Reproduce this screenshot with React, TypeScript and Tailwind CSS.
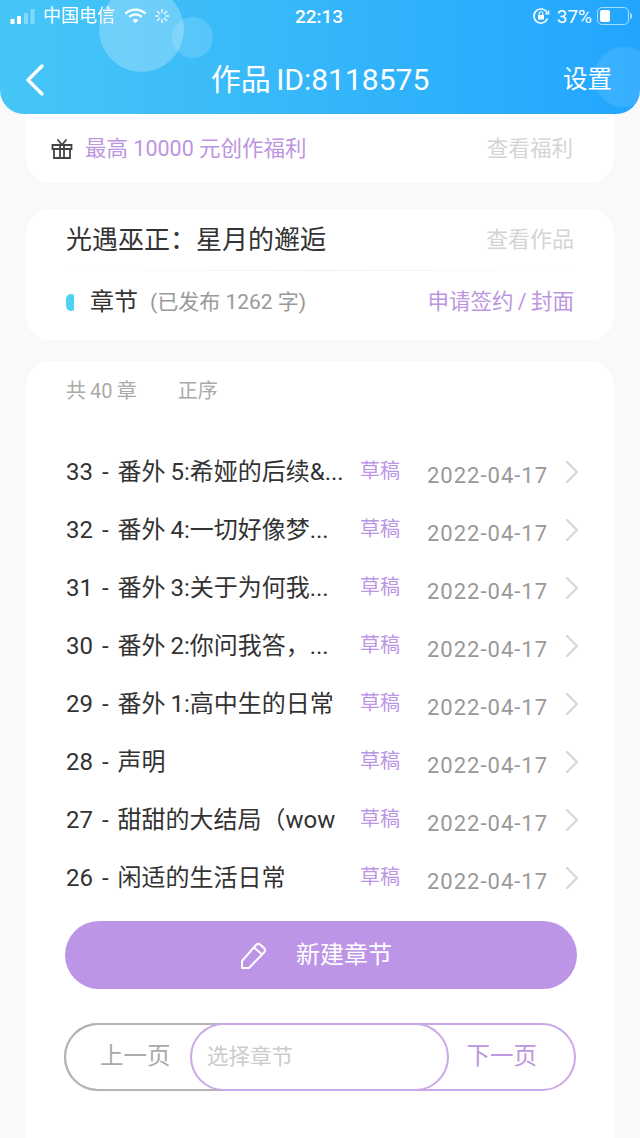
const FONT = "font-['Roboto','Noto_Sans_CJK_SC',sans-serif]";

const chapters = [
  "33 - 番外\u20095:希娅的后续&...",
  "32 - 番外\u20094:一切好像梦...",
  "31 - 番外\u20093:关于为何我...",
  "30 - 番外\u20092:你问我答，...",
  "29 - 番外\u20091:高中生的日常",
  "28 - 声明",
  "27 - 甜甜的大结局（wow",
  "26 - 闲适的生活日常",
];

function StatusBar() {
  return (
    <div className="flex h-[32px] items-center justify-between pl-[10px] pr-[8px] text-white">
      <div className="flex w-[190px] items-center">
        <svg width="28" height="18" viewBox="0 0 28 18" fill="white">
          <rect x="0.5" y="12" width="4" height="5" rx="1" />
          <rect x="7" y="9" width="4" height="8" rx="1" />
          <rect x="14" y="6" width="4" height="11" rx="1" opacity="0.35" />
          <rect x="20.5" y="2" width="4" height="15" rx="1" opacity="0.35" />
        </svg>
        <span className="ml-[5px] whitespace-nowrap text-[18px] leading-none">中国电信</span>
        <svg className="ml-[9px]" width="23" height="18" viewBox="0 0 24 18" fill="none" stroke="white" strokeWidth="2.4">
          <path d="M1.5 6.5C7.5 1 16.5 1 22.5 6.5" />
          <path d="M5.5 10C9.5 6.5 14.5 6.5 18.5 10" />
          <path d="M12 16.5 8.8 13.2C10.6 11.8 13.4 11.8 15.2 13.2Z" fill="white" stroke="none" />
        </svg>
        <svg className="ml-[7px]" width="16" height="16" viewBox="0 0 16 16" stroke="white" strokeWidth="1.4" opacity="0.85">
          <path d="M8 1v4M8 11v4M1 8h4M11 8h4M3 3l3 3M10 10l3 3M13 3l-3 3M6 10l-3 3" />
        </svg>
      </div>
      <span className="-translate-x-[2px] text-[19px] font-medium leading-none">22:13</span>
      <div className="flex w-[190px] items-center justify-end">
        <svg width="18" height="18" viewBox="0 0 18 18" fill="none" stroke="white" strokeWidth="1.6">
          <path d="M15.5 11.5A7 7 0 1 1 15.5 6.5" />
          <path d="M13.5 6.8h3.2V3.6" strokeWidth="1.2" />
          <rect x="6" y="8" width="6" height="4.5" fill="white" stroke="none" />
          <path d="M7.2 8V6.6a1.8 1.8 0 0 1 3.6 0V8" strokeWidth="1.1" />
        </svg>
        <span className="ml-[7px] text-[19px] leading-none">37%</span>
        <div className="ml-[5px] flex h-[18px] w-[32px] items-center rounded-[5px] border border-white/60 p-[2px]">
          <div className="h-full w-[10px] rounded-[2px] bg-white" />
        </div>
        <div className="ml-[1px] h-[6px] w-[2px] rounded-r-sm bg-white/60" />
      </div>
    </div>
  );
}

function Header() {
  return (
    <header className="relative h-[114px] overflow-hidden rounded-b-[24px] bg-gradient-to-r from-[#46c6f6] to-[#22a6fe]">
      <div className="absolute left-[99px] top-[-13px] h-[85px] w-[85px] rounded-full bg-white/25" />
      <div className="absolute left-[172px] top-[17px] h-[41px] w-[41px] rounded-full bg-white/15" />
      <div className="absolute left-[594px] top-[47px] h-[60px] w-[60px] rounded-full bg-white/10" />
      <div className="relative">
        <StatusBar />
        <div className="flex h-[50px] translate-y-[23px] items-center justify-between pl-[25px] pr-[28px] text-white">
          <svg width="20" height="32" viewBox="0 0 20 32" fill="none" stroke="white" strokeWidth="3.4" strokeLinecap="round" strokeLinejoin="round">
            <path d="M17 2 3 16l14 14" />
          </svg>
          <h1 className="translate-x-[16px] whitespace-nowrap text-[30px] leading-none [word-spacing:-2px]">作品 ID:8118575</h1>
          <span className="whitespace-nowrap text-[24.5px] leading-none">设置</span>
        </div>
      </div>
    </header>
  );
}

function ChapterRow({ title }: { title: string }) {
  return (
    <li className="flex h-[58px] items-center">
      <span className="w-[295px] shrink-0 whitespace-nowrap text-[24px] leading-none text-[#333] [word-spacing:3px]">{title}</span>
      <span className="shrink-0 -translate-x-px -translate-y-px whitespace-nowrap text-[20px] leading-none text-[#bd95e6]">草稿</span>
      <span className="ml-[26px] shrink-0 translate-y-[4px] whitespace-nowrap text-[22px] leading-none tracking-[1px] text-[#999]">2022-04-17</span>
      <svg className="ml-[17px] shrink-0" width="16" height="24" viewBox="0 0 16 24" fill="none" stroke="#d8d8d8" strokeWidth="2.4" strokeLinecap="round" strokeLinejoin="round">
        <path d="M2 2l10 10L2 22" />
      </svg>
    </li>
  );
}

export default function App() {
  return (
    <div className={`h-[1138px] overflow-hidden bg-[#f9f9f9] ${FONT}`}>
      <Header />
      <div className="mx-[26px]">
        <section className="flex h-[69px] items-center justify-between rounded-b-[24px] bg-white pl-[25px] pr-[41px]">
          <div className="flex items-center">
            <svg width="22" height="22" viewBox="0 0 22 22" fill="none" stroke="#444" strokeWidth="1.8">
              <path d="M1.5 7h19v4h-19zM3 11v9h16v-9M9 7v13M13 7v13" />
              <path d="M11 7 7 2M11 7l4-5" strokeLinecap="round" />
            </svg>
            <span className="ml-[12px] whitespace-nowrap text-[21.5px] leading-none text-[#bd95e0]">最高 10000 元创作福利</span>
          </div>
          <span className="whitespace-nowrap text-[21.5px] leading-none text-[#d4d4d4]">查看福利</span>
        </section>

        <section className="mt-[26px] h-[131px] rounded-[24px] bg-white px-[40px]">
          <div className="flex h-[61px] items-center justify-between">
            <span className="whitespace-nowrap text-[26px] leading-none text-[#333]">光遇巫正：星月的邂逅</span>
            <span className="whitespace-nowrap text-[22px] leading-none text-[#d4d4d4]">查看作品</span>
          </div>
          <div className="h-px bg-gradient-to-r from-transparent via-[#efefef] to-transparent" />
          <div className="flex h-[62px] items-center justify-between">
            <div className="flex items-center">
              <div className="h-[17px] w-[8px] rounded-l-[5px] rounded-r-[2px] bg-[#4fd2f2]" />
              <span className="ml-[16px] whitespace-nowrap text-[24px] leading-none text-[#333]">章节</span>
              <span className="ml-[12px] whitespace-nowrap text-[21px] leading-none text-[#999]">(已发布 1262 字)</span>
            </div>
            <span className="whitespace-nowrap text-[21.5px] leading-none text-[#bd95e0] [word-spacing:-1px]">申请签约 / 封面</span>
          </div>
        </section>

        <section className="mt-[21px] h-[800px] rounded-t-[24px] bg-white px-[40px]">
          <div className="flex gap-[41px] pt-[20px] text-[20px] leading-none text-[#aaa]">
            <span className="whitespace-nowrap">共{"\u2009"}40{"\u2009"}章</span>
            <span className="whitespace-nowrap">正序</span>
          </div>
          <ul className="mt-[42px]">
            {chapters.map((title) => (
              <ChapterRow key={title} title={title} />
            ))}
          </ul>
          <button className="-ml-px mt-[14px] flex h-[68px] w-[512px] items-center justify-center rounded-full bg-[#bd95e6] pr-[10px] text-white">
            <svg width="28" height="27" viewBox="0 0 28 27" fill="none" stroke="white" strokeWidth="2" strokeLinejoin="round">
              <path d="M2 26v-7L16 3q2-2 4-.5l4 3.5q2 2 .5 4L9 26Z" />
              <path d="M14 5.5l7.5 6.5" />
            </svg>
            <span className="ml-[28px] whitespace-nowrap text-[24px] leading-none">新建章节</span>
          </button>
          <div className="relative -ml-[2px] mt-[34px] flex h-[68px] w-[512px] items-center justify-between rounded-full border-2 border-[#c9a8e8] pl-[34px] pr-[37px] text-[23.5px] leading-none">
            <div className="absolute left-[-2px] top-[-2px] h-[68px] w-[160px] rounded-l-full border-2 border-r-0 border-[#b4b4b4]" />
            <span className="whitespace-nowrap text-[#aaa]">上一页</span>
            <span className="whitespace-nowrap text-[#bd95e0]">下一页</span>
            <div className="absolute left-[124px] top-[-2px] flex h-[68px] w-[259px] items-center rounded-full border-2 border-[#c9a8e8] bg-white pl-[15px] text-[21.5px] text-[#ccc]">
              选择章节
            </div>
          </div>
        </section>
      </div>
    </div>
  );
}
